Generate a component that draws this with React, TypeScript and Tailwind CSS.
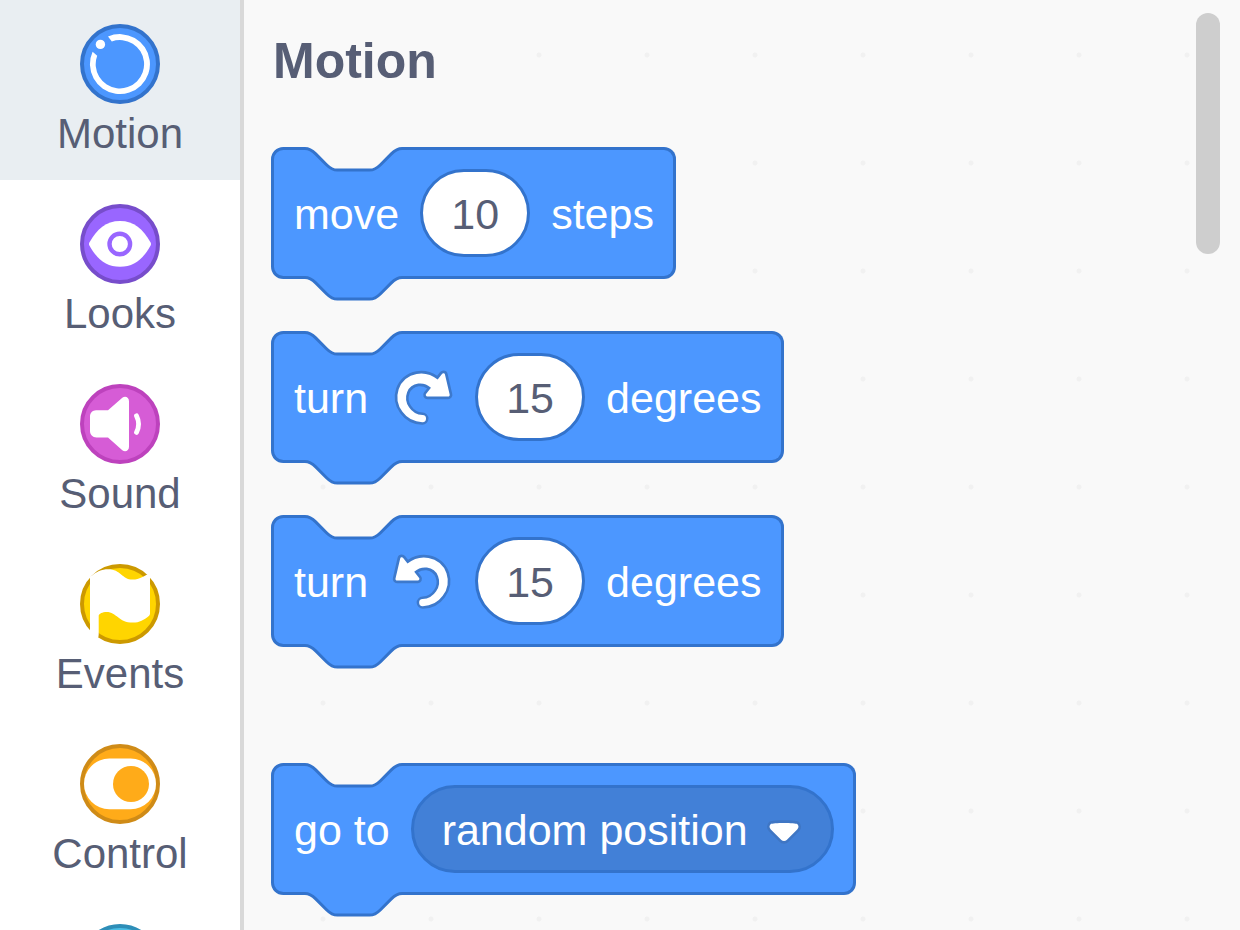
import { useState, type ReactNode } from "react";

type CategoryProps = {
  name: string;
  selected: boolean;
  onSelect: () => void;
  icon: ReactNode;
};

function CategoryIcon({ fill, border, children }: { fill: string; border: string; children?: ReactNode }) {
  return (
    <svg viewBox="0 0 80 80" className="size-20 shrink-0" aria-hidden="true">
      <circle cx="40" cy="40" r="38" fill={fill} stroke={border} strokeWidth="4" />
      {children}
    </svg>
  );
}

const categories: { name: string; showLabel: boolean; icon: ReactNode }[] = [
  {
    name: "Motion",
    showLabel: true,
    icon: (
      <CategoryIcon fill="#4C97FF" border="#3373CC">
        <path
          fill="#fff"
          d="M28 12.6A30 30 0 1 1 12.6 27.8L17.2 31.8A24.2 24.2 0 1 0 31.8 17.4Z"
        />
        <circle cx="20.4" cy="20.4" r="4.7" fill="#fff" />
      </CategoryIcon>
    ),
  },
  {
    name: "Looks",
    showLabel: true,
    icon: (
      <CategoryIcon fill="#9966FF" border="#774DCB">
        <path
          fill="#fff"
          d="M9.4 38.5C17 25 26 17 40 17S63 25 70.6 38.5Q71.4 40 70.6 41.5C63 55 54 62.8 40 62.8S17 55 9.4 41.5Q8.6 40 9.4 38.5Z"
        />
        <circle cx="39.8" cy="40" r="10.3" fill="#fff" stroke="#9966FF" strokeWidth="4.4" />
      </CategoryIcon>
    ),
  },
  {
    name: "Sound",
    showLabel: true,
    icon: (
      <CategoryIcon fill="#D65CD6" border="#BD42BD">
        <path
          fill="#fff"
          d="M16 26.2H28L42.3 13.8C45 11.6 49 13 49 17.2V62.8C49 67 45 68.4 42.3 66.2L28 53.5H16.5C12.5 53.5 10 50.5 10 47V32.5C10 29 12.5 26.2 16 26.2Z"
        />
        <path d="M56.5 31.8Q60.7 40 56.5 48.4" fill="none" stroke="#fff" strokeWidth="4.8" strokeLinecap="round" />
      </CategoryIcon>
    ),
  },
  {
    name: "Events",
    showLabel: true,
    icon: (
      <CategoryIcon fill="#FFD500" border="#CC9900">
        <path
          fill="#fff"
          d="M10 13C16 7.5 22 5.2 28 5.2C41 5.2 42 15.6 52.5 15.6C60 15.6 64 12 67 10.8Q70 10 70 13.5V49.5Q70 51 68.8 52C64 56 59.5 58.6 53 58.6C38 58.6 37 47.9 26.5 47.9C22.5 47.9 19 49.6 18.7 51.5V70.5Q18.7 73 17.6 74.5V80H10Z"
        />
      </CategoryIcon>
    ),
  },
  {
    name: "Control",
    showLabel: true,
    icon: (
      <CategoryIcon fill="#FFAB19" border="#CF8B17">
        <rect x="4" y="14.6" width="72" height="50.6" rx="25.3" fill="#fff" />
        <circle cx="51" cy="40" r="18" fill="#FFAB19" />
      </CategoryIcon>
    ),
  },
  {
    name: "Sensing",
    showLabel: false,
    icon: <CategoryIcon fill="#4CBFE6" border="#2E8EB8" />,
  },
];

function Category({ name, selected, onSelect, icon, showLabel }: CategoryProps & { showLabel: boolean }) {
  return (
    <button
      type="button"
      aria-label={name}
      aria-pressed={selected}
      onClick={onSelect}
      className={
        "flex w-full shrink-0 cursor-pointer flex-col items-center pt-6 pb-4 text-[42px] leading-[60px] " +
        (selected ? "bg-[#E9EEF2]" : "bg-white")
      }
    >
      {icon}
      {showLabel && <span>{name}</span>}
    </button>
  );
}

const capOutline =
  "M50.5 0H48c-2 0-3 1-4 2l-4 4c-1 1-2 2-4 2h-12c-2 0-3-1-4-2l-4-4c-1-1-2-2-4-2H4a4 4 0 0 0-4 4v39.78a4 4 0 0 0 4 4h8c2 0 3 1 4 2l4 4c1 1 2 2 4 2h12c2 0 3-1 4-2l4-4c1-1 2-2 4-2h2.5";

/* A stackable block: the left cap carries the notch and the bump, the right part stretches. */
function Block({ children }: { children: ReactNode }) {
  return (
    <div className="relative w-fit">
      <div className="absolute inset-0 flex" aria-hidden="true">
        <svg width="136" height="155" className="shrink-0">
          <g transform="translate(1.5 1.5) scale(2.7)">
            <path d={capOutline} fill="#4C97FF" stroke="#3373CC" strokeWidth="1.1" />
          </g>
        </svg>
        <div className="flex-1 rounded-r-[12px] border-y-3 border-r-3 border-[#3373CC] bg-[#4C97FF]" />
      </div>
      <label className="relative flex items-center gap-[21px] py-[22px] pr-[22px] pl-[23px] text-[43px] leading-[52px] whitespace-nowrap text-white">
        {children}
      </label>
    </div>
  );
}

function Word({ children }: { children: ReactNode }) {
  return <span className="pt-0.5">{children}</span>;
}

function NumberField({ initial }: { initial: string }) {
  const [value, setValue] = useState(initial);
  return (
    <input
      type="text"
      inputMode="numeric"
      value={value}
      onChange={(e) => setValue(e.target.value)}
      className="h-[88px] w-[110px] rounded-full border-3 border-[#3373CC] bg-white pt-0.5 text-center text-[#575E75] outline-none"
    />
  );
}

function TurnArrow({ flipped = false }: { flipped?: boolean }) {
  return (
    <svg viewBox="-0.4 0.2 24 24" className="size-[65px]" aria-hidden="true">
      <g transform={flipped ? "translate(24 0) scale(-1 1)" : undefined}>
        <path
          fill="#3D79CC"
          d="M22.68,12.2a1.6,1.6,0,0,1-1.27.63H13.72a1.59,1.59,0,0,1-1.16-2.58l1.12-1.41a4.82,4.82,0,0,0-3.14-.77,4.31,4.31,0,0,0-2,.8,4.25,4.25,0,0,0-1.34,1.73,5.06,5.06,0,0,0,.54,4.62A5.58,5.58,0,0,0,12,17.74h0a2.26,2.26,0,0,1-.16,4.52A10.25,10.25,0,0,1,3.74,18,10.14,10.14,0,0,1,2.25,8.78,9.7,9.7,0,0,1,5.08,4.64,9.92,9.92,0,0,1,9.66,2.5a10.66,10.66,0,0,1,7.72,1.68l1.08-1.35a1.57,1.57,0,0,1,1.24-.6,1.6,1.6,0,0,1,1.54,1.21l1.7,7.37A1.57,1.57,0,0,1,22.68,12.2Z"
        />
        <path
          fill="#fff"
          d="M21.38,11.83H13.77a.59.59,0,0,1-.43-1l1.75-2.19a5.9,5.9,0,0,0-4.7-1.58,5.07,5.07,0,0,0-4.11,3.17A6,6,0,0,0,7,15.77a6.51,6.51,0,0,0,5,2.92,1.31,1.31,0,0,1-.08,2.62,9.3,9.3,0,0,1-7.35-3.82A9.16,9.16,0,0,1,3.17,9.12,8.51,8.51,0,0,1,5.71,5.4,8.76,8.76,0,0,1,9.82,3.48a9.71,9.71,0,0,1,7.75,2.07l1.67-2.1a.59.59,0,0,1,1,.21L22,11.08A.59.59,0,0,1,21.38,11.83Z"
        />
      </g>
    </svg>
  );
}

function TargetMenu() {
  return (
    <span className="relative flex">
      <select className="h-[88px] cursor-pointer appearance-none rounded-full border-3 border-[#3373CC] bg-[#4280D7] pt-0.5 pr-[83px] pl-7 text-white outline-none">
        <option>random position</option>
      </select>
      <svg
        viewBox="0 0 12.71 8.79"
        className="pointer-events-none absolute top-[35px] right-[33px] h-6 w-[34px]"
        aria-hidden="true"
      >
        <path
          fill="#231F20"
          opacity="0.1"
          d="M12.71,2.44A2.41,2.41,0,0,1,12,4.16L8.08,8.08a2.45,2.45,0,0,1-3.45,0L0.72,4.16A2.42,2.42,0,0,1,0,2.44,2.48,2.48,0,0,1,.71.71C1,0.47,1.43,0,6.36,0S11.75,0.46,12,.71A2.44,2.44,0,0,1,12.71,2.44Z"
        />
        <path
          fill="#fff"
          d="M6.36,7.79a1.43,1.43,0,0,1-1-.42L1.42,3.45a1.44,1.44,0,0,1,0-2c0.56-.56,9.31-0.56,9.87,0a1.44,1.44,0,0,1,0,2L7.37,7.37A1.43,1.43,0,0,1,6.36,7.79Z"
        />
      </svg>
    </span>
  );
}

export default function App() {
  const [selected, setSelected] = useState("Motion");

  return (
    <div className="flex h-screen overflow-hidden bg-white font-['Liberation_Sans',Arial,sans-serif] text-[#575E75]">
      <nav className="flex w-[244px] shrink-0 flex-col overflow-hidden border-r-4 border-[#D9D9D9]">
        {categories.map((c) => (
          <Category
            key={c.name}
            name={c.name}
            icon={c.icon}
            showLabel={c.showLabel}
            selected={selected === c.name}
            onSelect={() => setSelected(c.name)}
          />
        ))}
      </nav>

      <main className="relative min-w-0 flex-1 overflow-hidden bg-[#F9F9F9] bg-[radial-gradient(circle,#F1F1F1_2px,transparent_3px)] bg-[size:108px_108px] bg-[position:25px_1px] pt-[26px] pl-[27px]">
        <h1 className="pl-0.5 text-[50px] leading-[70px] font-bold">Motion</h1>
        <div className="mt-[51px] flex flex-col gap-[52px]">
          <Block>
            <Word>move</Word>
            <NumberField initial="10" />
            <Word>steps</Word>
          </Block>
          <Block>
            <Word>turn</Word>
            <TurnArrow />
            <NumberField initial="15" />
            <Word>degrees</Word>
          </Block>
          <Block>
            <Word>turn</Word>
            <TurnArrow flipped />
            <NumberField initial="15" />
            <Word>degrees</Word>
          </Block>
          <div className="mt-16">
            <Block>
              <Word>go to</Word>
              <TargetMenu />
            </Block>
          </div>
        </div>
        <div className="absolute top-[13px] right-5 h-[241px] w-6 rounded-full bg-[#CECECE]" />
      </main>
    </div>
  );
}
